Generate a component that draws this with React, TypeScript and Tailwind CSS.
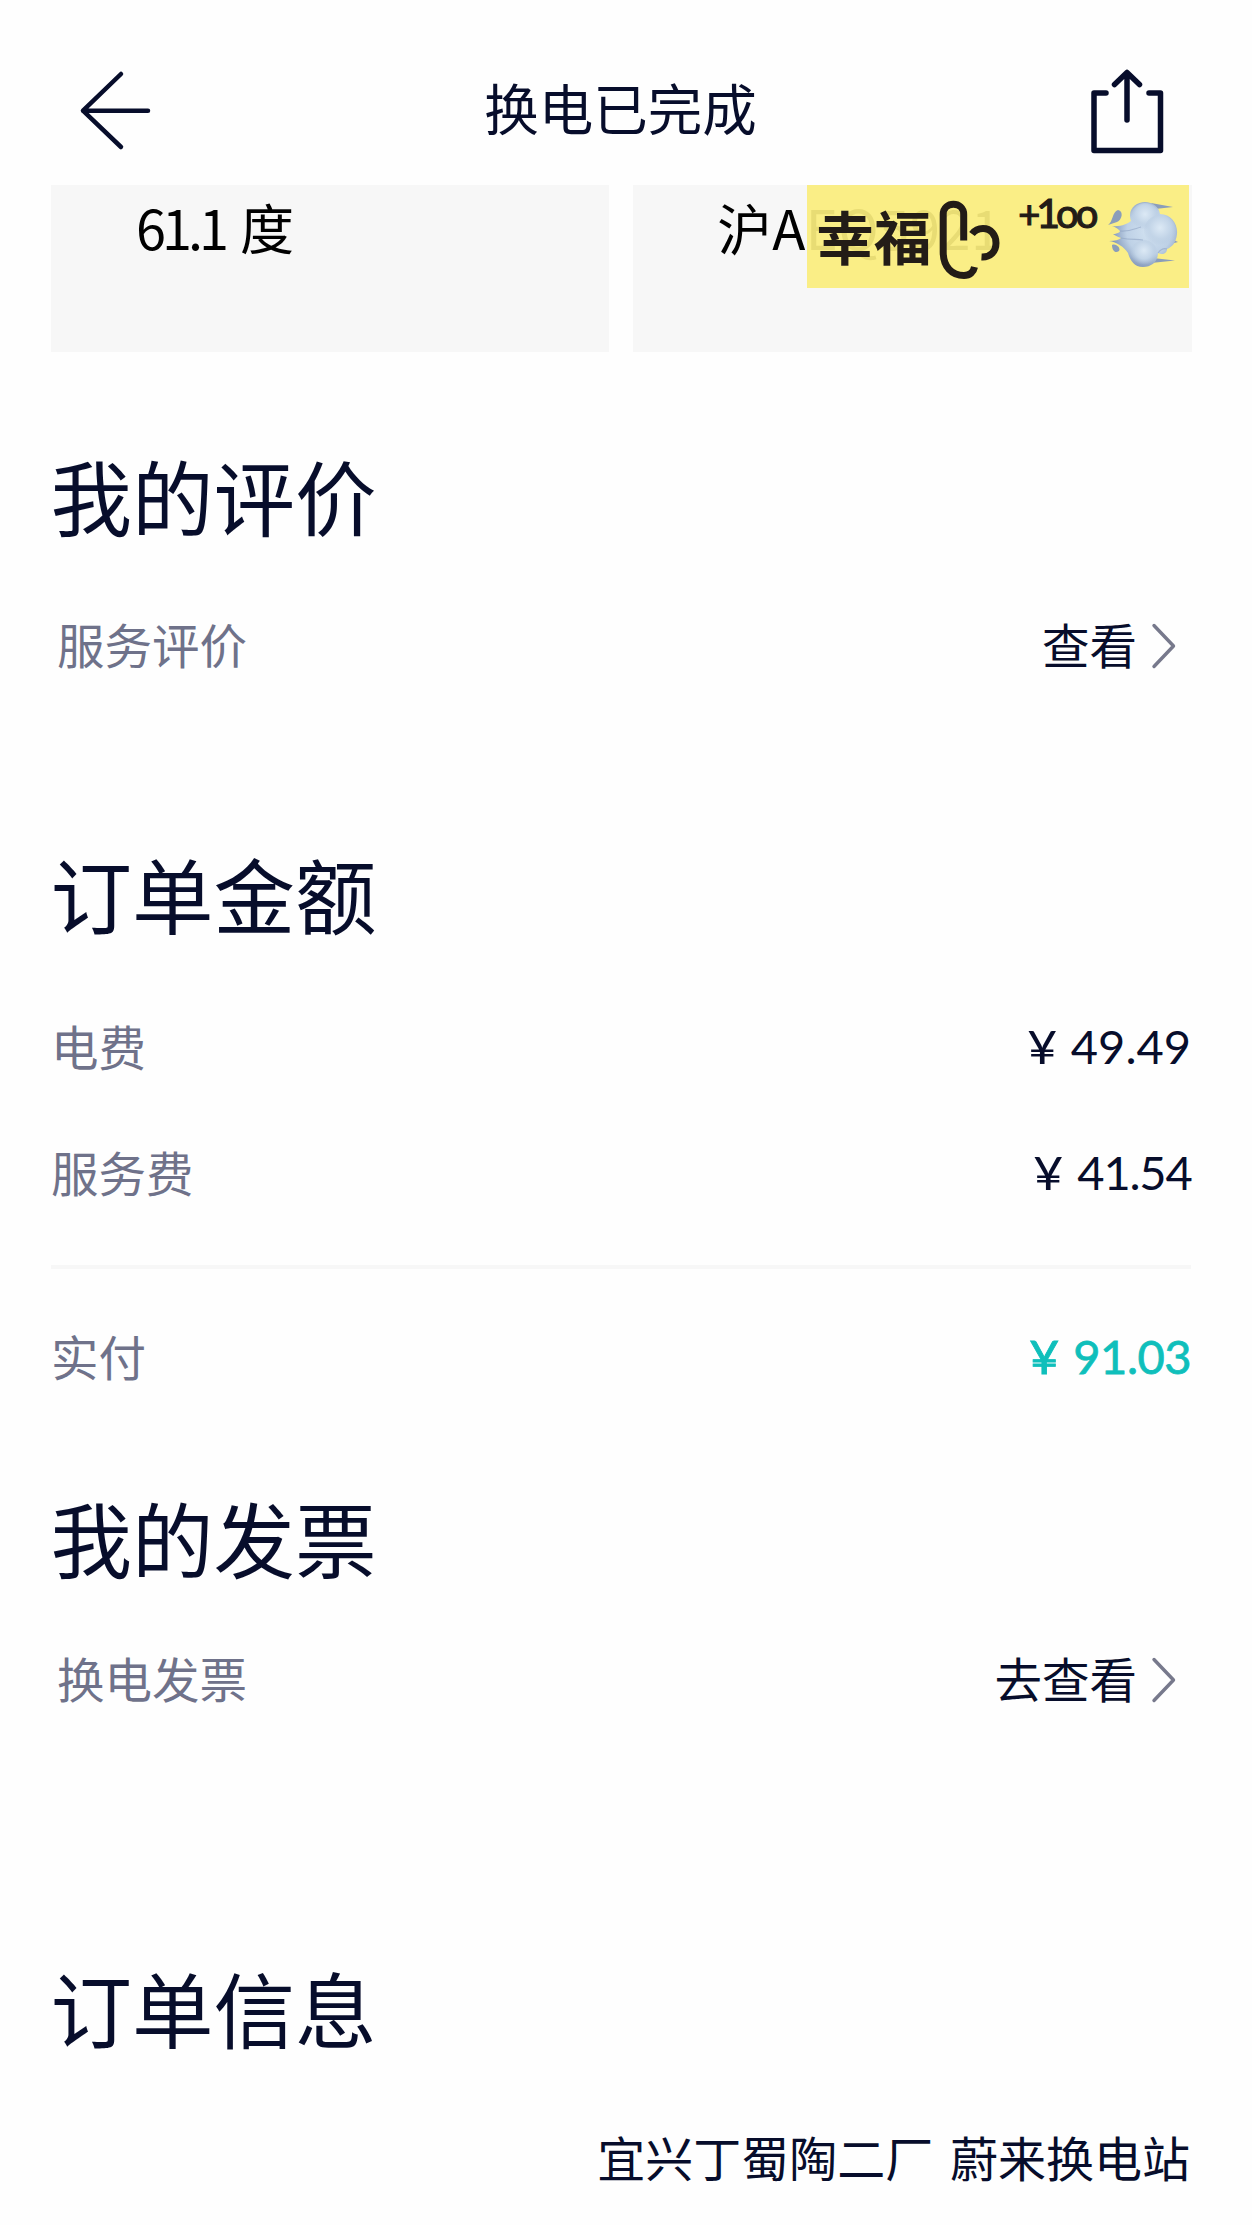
const SANS = "font-['Noto_Sans_CJK_SC',sans-serif]";
const NUM = "font-['Lato','Noto_Sans_CJK_SC',sans-serif]";

export default function App() {
  return (
    <div className={`${SANS} w-[1252px] h-[2225px] overflow-hidden bg-[#fefefe] text-[#070d2b] flex flex-col`}>
      <Header />

      {/* Energy + plate cards */}
      <section className="grid grid-cols-2 gap-[24px] pl-[51px] pr-[60.5px] h-[167px] shrink-0">
        <div className="bg-[#f7f7f7] pl-[85px] pt-[1.5px] text-[54px] leading-[80px] text-black whitespace-pre">
          <span className="tracking-[-4px]">61.1</span> <span className="ml-[3px]">度</span>
        </div>
        <div className="relative bg-[#f7f7f7] pl-[84px] pt-[1.5px] text-[54.5px] leading-[80px] tracking-[0.4px] text-black whitespace-nowrap">
          沪AEQ5921
          <PlateSticker />
        </div>
      </section>

      <SectionTitle title="我的评价" className="mt-[82px]" />
      <LinkRow label="服务评价" action="查看" className="mt-[50px]" />

      <SectionTitle title="订单金额" className="mt-[148px]" />
      <PriceRow label="电费" value="49.49" className="mt-[54px]" />
      <PriceRow label="服务费" value="41.54" tracking="tracking-[-1.2px] mr-[-0.5px]" className="mt-[46px]" />
      <div className="ml-[51px] mr-[61px] mt-[53px] h-1 shrink-0 bg-[#f7f7f7]" />
      <PriceRow label="实付" value="91.03" tracking="tracking-[-0.5px]" highlight className="mt-[47px]" />

      <SectionTitle title="我的发票" className="mt-[80px]" />
      <LinkRow label="换电发票" action="去查看" className="mt-[42px]" />

      <SectionTitle title="订单信息" className="mt-[228px]" />
      <div className="mt-[50px] pr-[62px] h-[58px] shrink-0 text-right text-[48px] leading-[80px] [word-spacing:6px] whitespace-nowrap">
        宜兴丁蜀陶二厂 蔚来换电站
      </div>
    </div>
  );
}

const Header = () => (
  <header className="h-[185px] shrink-0 pl-[78px] pr-[86px] pt-[66px] flex items-start justify-between">
    <svg className="w-[75px] h-[88px]" viewBox="0 0 75 88" fill="none" stroke="#070d2b" strokeWidth="4.5" strokeLinecap="round" strokeLinejoin="round">
      <path d="M43 8 5 44.7 43 81M5 44.7H70" />
    </svg>
    <h1 className="-mt-[3px] text-[54.5px] leading-[88px]">换电已完成</h1>
    <svg className="w-[78px] h-[90px]" viewBox="0 0 78 90" fill="none" stroke="#070d2b" strokeWidth="5.5" strokeLinecap="round" strokeLinejoin="round">
      <path d="M18 27H6V84.500H72.500V27H61M39 7V54M26.500 18.500 39 6.500 51.500 18.500" />
    </svg>
  </header>
);

const SectionTitle = ({ title, className }: { title: string; className: string }) => (
  <h2 className={`pl-[50.5px] h-[120px] shrink-0 text-[81.5px] leading-[120px] ${className}`}>{title}</h2>
);

const LinkRow = ({ label, action, className }: { label: string; action: string; className: string }) => (
  <div className={`pl-[57px] pr-[75px] h-20 shrink-0 flex items-center text-[47.5px] leading-[80px] ${className}`}>
    <span className="text-[#6f728a]">{label}</span>
    <span className="ml-auto mr-[14px]">{action}</span>
    <svg className="mt-[4px] w-[26px] h-[48px]" viewBox="0 0 26 48" fill="none" stroke="#77798c" strokeWidth="3.4" strokeLinecap="round" strokeLinejoin="round">
      <path d="M3 3.500 22.500 24 3 44.500" />
    </svg>
  </div>
);

type PriceRowProps = { label: string; value: string; tracking?: string; highlight?: boolean; className: string };

const PriceRow = ({ label, value, tracking = "", highlight, className }: PriceRowProps) => (
  <div className={`pl-[51px] pr-[61px] h-20 shrink-0 flex items-center leading-[80px] ${className}`}>
    <span className="text-[47.5px] text-[#6f728a]">{label}</span>
    <div className={`${NUM} ml-auto flex text-[47px] ${highlight ? "text-[#0fbfbb] [-webkit-text-stroke:0.8px_#0fbfbb]" : ""}`}>
      <span className="mr-[14px] origin-right scale-x-110">¥</span>
      <span className={tracking}>{value}</span>
    </div>
  </div>
);

// Sticker laid over the plate number
const PlateSticker = () => (
  <div className="absolute left-[174px] top-0 w-[381.5px] h-[103px] bg-[#faed7d]/93 text-[#231c17] tracking-normal">
    <span className="absolute left-[9px] top-[10px] text-[57.5px] leading-[80px] font-bold">幸福</span>
    <svg className="absolute left-[128px] top-[12px] w-[66px] h-[86px]" viewBox="0 0 66 86" fill="none" stroke="#231c17" strokeWidth="7">
      <path d="M28.700 43.500V17.500C28.700 3.800 8.200 3.800 8.200 17.500V55C8.200 70 17 78.500 29 78.500C35 78.500 38.500 75 39.500 70" />
      <path d="M37 37C40 33 44 31.500 48 31.500C56 31.500 61 38 61 46C61 55 55 60.500 46.500 60" />
    </svg>
    <span className="absolute left-[211px] top-[3px] flex items-baseline font-['Lato',sans-serif] leading-[50px] [-webkit-text-stroke:1.2px_#231c17]">
      <span className="text-[38px]">+</span>
      <span className="text-[41px] -ml-[4px]">1</span>
      <span className="text-[40px] -ml-[4px] tracking-[-3px]">oo</span>
    </span>
    <DashCloud />
  </div>
);

const DashCloud = () => (
  <svg className="absolute left-[300px] top-[15px] w-[74px] h-[72px]" viewBox="0 0 74 72">
    <defs>
      <radialGradient id="body" gradientUnits="userSpaceOnUse" cx="42" cy="32" r="37">
        <stop offset="0" stopColor="#d2e2f1" />
        <stop offset="0.6" stopColor="#bed1e6" />
        <stop offset="1" stopColor="#8297b9" />
      </radialGradient>
      <radialGradient id="puff" cx="0.5" cy="0.4" r="0.55">
        <stop offset="0" stopColor="#dce9f5" />
        <stop offset="0.6" stopColor="#c3d5e8" />
        <stop offset="1" stopColor="#b4c8df" stopOpacity="0" />
      </radialGradient>
    </defs>
    <g fill="#8a9dba">
      <path d="M44 3 66 7 48 9ZM46 58 68 60.500 44 63ZM62 38 71 42 60 45Z" />
      <path d="M1 25C6 22 5 12 11 10C17 11 15 20 10 22Z" />
      <path d="M5 45C9 43 14 48 12 51C8 54 5 50 5 45Z" />
    </g>
    <path
      d="M5 26C14 27 20 24 24 21C20 9 29 2 38 2C46 2 52 7 53 14C64 14 71 24 70 34C69 43 65 47 60 49C60 54 55 55 51 53C51 62 44 67 36 67C27 67 23 60 21 53C17 47 10 42 2 41C8 41 12 40 14 38C10 37 8 35 6 34C10 34 13 32 13 31C10 28 8 27 5 26Z"
      fill="url(#body)"
    />
    <circle cx="38" cy="17" r="14" fill="url(#puff)" />
    <circle cx="53" cy="31" r="16" fill="url(#puff)" />
    <circle cx="37" cy="53" r="13" fill="url(#puff)" />
    <path d="M14 38C23 40 29 39 36 40M13 31C22 32 27 29 34 27M51 53C54 49 57 48 60 49" fill="none" stroke="#8fa4c3" strokeWidth="1.2" strokeOpacity="0.6" />
  </svg>
);
